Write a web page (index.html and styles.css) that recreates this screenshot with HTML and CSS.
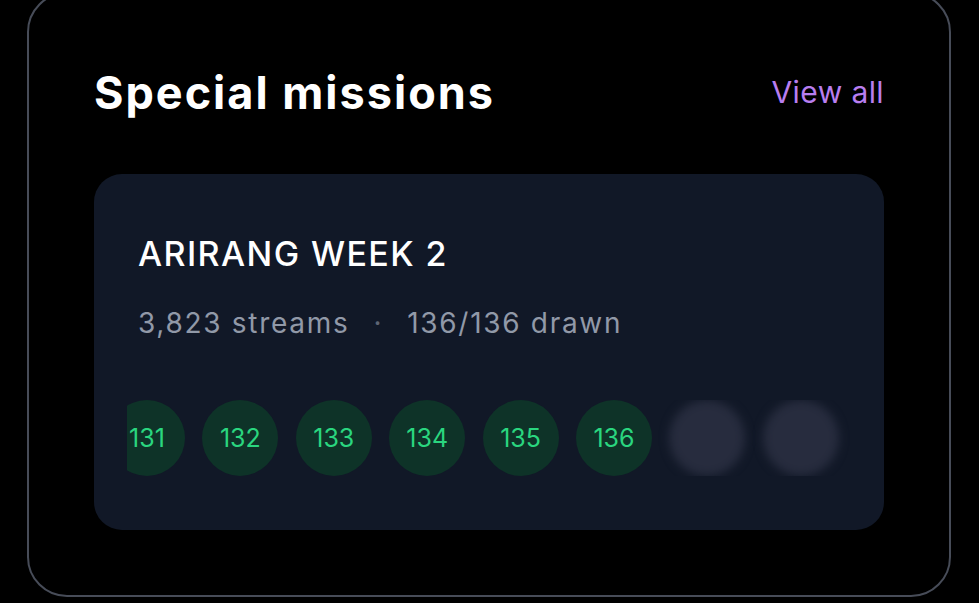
FILE: index.html
```html
<!DOCTYPE html>
<html lang="en">
	<head>
		<meta charset="UTF-8" />
		<title>special missions</title>
		<link rel="stylesheet" href="styles.css">
	</head>
	<body>
		<div class="panel">
			<div class="header">
				<p class="title">Special missions</p>
				<a class="viewall" href="#">View all</a>
			</div>
			<div class="card">
				<p class="mission">ARIRANG WEEK 2</p>
				<div class="stats">
					<span>3,823 streams</span>
					<span class="dot">·</span>
					<span>136/136 drawn</span>
				</div>
				<div class="strip">
					<div class="track">
						<div class="ball">131</div>
						<div class="ball">132</div>
						<div class="ball">133</div>
						<div class="ball">134</div>
						<div class="ball">135</div>
						<div class="ball">136</div>
						<div class="ball hidden"></div>
						<div class="ball hidden"></div>
					</div>
				</div>
			</div>
		</div>
	</body>
</html>
```

FILE: styles.css
```css
body,
html {
	margin: 0;
	background-color: #000;
	font-family: Inter, "Noto Sans", sans-serif;
	overflow: hidden;
}

.panel {
	margin: -8px 28px 0 27px;
	padding: 70px 65px 65px 65px;
	border: 2px solid #474c58;
	border-radius: 40px;
}

.header {
	display: flex;
	flex-direction: row;
	justify-content: space-between;
	align-items: center;
	height: 56px;
}

.title {
	margin: 0;
	color: #fff;
	font-size: 45px;
	font-weight: 700;
	letter-spacing: 2px;
}

.viewall {
	color: #b87ef0;
	font-size: 30px;
	text-decoration: none;
	letter-spacing: 0.4px;
}

.card {
	margin-top: 54px;
	background-color: #111827;
	border-radius: 28px;
	padding: 60px 44px 54px 44px;
}

.mission {
	margin: 0;
	color: #fff;
	font-size: 34px;
	line-height: 40px;
	font-weight: 500;
	letter-spacing: 1.4px;
}

.stats {
	margin-top: 31px;
	display: flex;
	flex-direction: row;
	gap: 24px;
	color: #9199a8;
	font-size: 28px;
	line-height: 36px;
	letter-spacing: 1.7px;
}

.dot {
	color: #5d6574;
}

.strip {
	margin: 59px -11px 0 -11px;
	overflow: hidden;
}

.track {
	display: flex;
	flex-direction: row;
	gap: 17.4px;
	margin-left: -18px;
}

.ball {
	flex: none;
	width: 76px;
	height: 76px;
	border-radius: 50%;
	background-color: #0e3328;
	color: #2ad67f;
	font-size: 25px;
	display: flex;
	justify-content: center;
	align-items: center;
}

.ball.hidden {
	background-color: #272c3e;
	filter: blur(5px);
}
```
